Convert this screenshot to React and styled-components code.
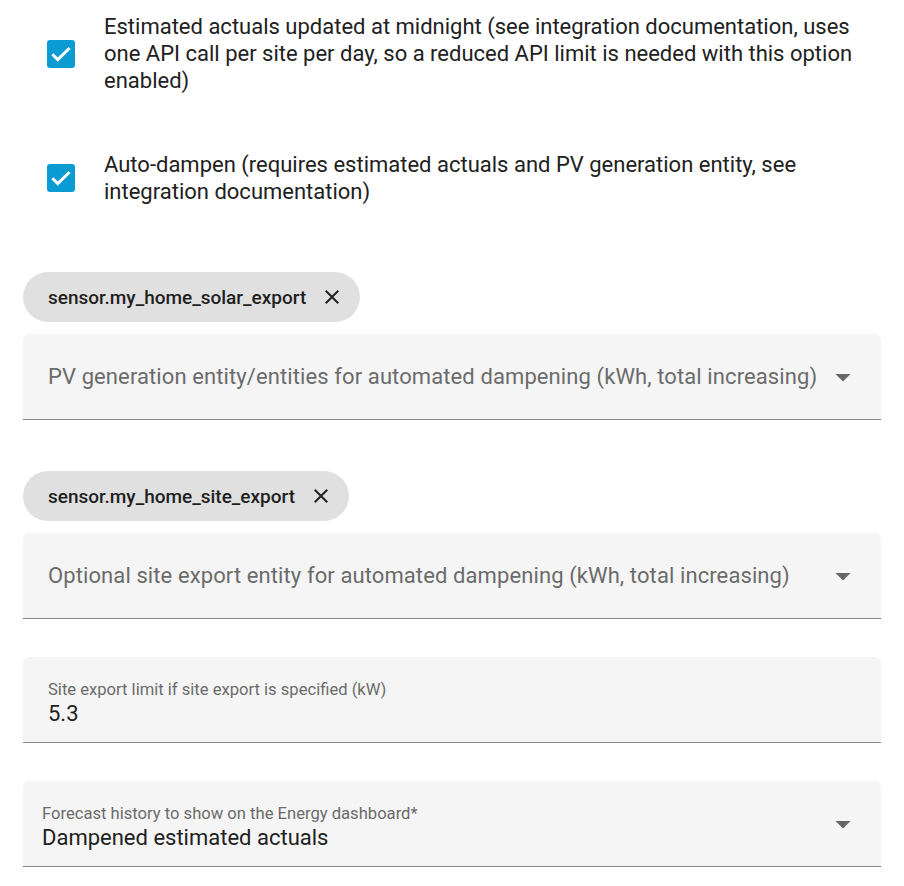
import React from "react";
import styled, { createGlobalStyle } from "styled-components";

const Global = createGlobalStyle`
  html, body { margin: 0; padding: 0; background: #fff; }
  body { font-family: Roboto, "Noto Sans", sans-serif; color: #212121; }
`;

const Page = styled.div`
  width: 904px;
  padding: 0 23px;
  box-sizing: border-box;
  display: flex;
  flex-direction: column;
`;

const CheckRow = styled.label`
  display: flex;
  align-items: center;
  padding-left: 24px;
  margin-top: ${(p) => p.$top}px;
`;

const Box = styled.span`
  width: 28px;
  height: 28px;
  border-radius: 3px;
  background: #0a9bd3;
  display: flex;
  align-items: center;
  justify-content: center;
  flex: none;
`;

const CheckText = styled.span`
  margin-left: 29px;
  font-size: 22px;
  line-height: 27px;
  color: #212121;
`;

const Chip = styled.div`
  align-self: flex-start;
  height: 50px;
  border-radius: 25px;
  background: #e0e0e0;
  display: flex;
  align-items: center;
  padding: 0 15px 0 25px;
  margin-top: ${(p) => p.$top}px;
  font-size: 19px;
  font-weight: 500;
  color: #1f1f1f;
  gap: 13px;
`;

const Field = styled.div`
  height: 86px;
  box-sizing: border-box;
  background: #f5f5f5;
  border-radius: 6px 6px 0 0;
  border-bottom: 1.5px solid #8a8a8a;
  margin-top: ${(p) => p.$top}px;
  display: flex;
  align-items: center;
  padding: 0 ${(p) => p.$pr || 25}px 0 ${(p) => p.$pl || 25}px;
`;

const FieldBody = styled.div`
  flex: 1;
  display: flex;
  flex-direction: column;
  padding-top: ${(p) => p.$pt || 0}px;
`;

const Placeholder = styled.span`
  font-size: 22px;
  color: #6b6b6b;
  letter-spacing: 0.1px;
`;

const FloatLabel = styled.span`
  font-size: 16.6px;
  color: #6b6b6b;
  line-height: 20px;
`;

const Value = styled.span`
  font-size: 22px;
  color: #212121;
  line-height: 28px;
`;

const Check = () => (
  <svg width="28" height="28" viewBox="0 0 24 24">
    <path d="M4.6 12.2l4.6 4.6L19.4 6.8" fill="none" stroke="#fff" strokeWidth="2.5" />
  </svg>
);

const Close = () => (
  <svg width="26" height="26" viewBox="0 0 24 24">
    <path
      fill="#222"
      d="M19 6.41L17.59 5 12 10.59 6.41 5 5 6.41 10.59 12 5 17.59 6.41 19 12 13.41 17.59 19 19 17.59 13.41 12z"
      transform="translate(12 12) scale(0.92) translate(-12 -12)"
    />
  </svg>
);

const MenuDown = () => (
  <svg width="36" height="36" viewBox="0 0 24 24">
    <path fill="#666" d="M7,10L12,15L17,10H7Z" />
  </svg>
);

export default function App() {
  return (
    <>
      <Global />
      <Page>
        <CheckRow $top={13}>
          <Box>
            <Check />
          </Box>
          <CheckText>
            Estimated actuals updated at midnight (see integration documentation, uses one API call per site per day, so a reduced API limit is needed with this option enabled)
          </CheckText>
        </CheckRow>
        <CheckRow $top={57}>
          <Box>
            <Check />
          </Box>
          <CheckText>
            Auto-dampen (requires estimated actuals and PV generation entity, see integration documentation)
          </CheckText>
        </CheckRow>

        <Chip $top={67}>
          sensor.my_home_solar_export
          <Close />
        </Chip>
        <Field $top={12} $pr={20}>
          <FieldBody>
            <Placeholder>
              PV generation entity/entities for automated dampening (kWh, total increasing)
            </Placeholder>
          </FieldBody>
          <MenuDown />
        </Field>

        <Chip $top={51}>
          sensor.my_home_site_export
          <Close />
        </Chip>
        <Field $top={12} $pr={20}>
          <FieldBody>
            <Placeholder>
              Optional site export entity for automated dampening (kWh, total increasing)
            </Placeholder>
          </FieldBody>
          <MenuDown />
        </Field>

        <Field $top={38}>
          <FieldBody $pt={8}>
            <FloatLabel>Site export limit if site export is specified (kW)</FloatLabel>
            <Value>5.3</Value>
          </FieldBody>
        </Field>

        <Field $top={38} $pl={19} $pr={20}>
          <FieldBody $pt={8}>
            <FloatLabel>Forecast history to show on the Energy dashboard*</FloatLabel>
            <Value>Dampened estimated actuals</Value>
          </FieldBody>
          <MenuDown />
        </Field>
      </Page>
    </>
  );
}
